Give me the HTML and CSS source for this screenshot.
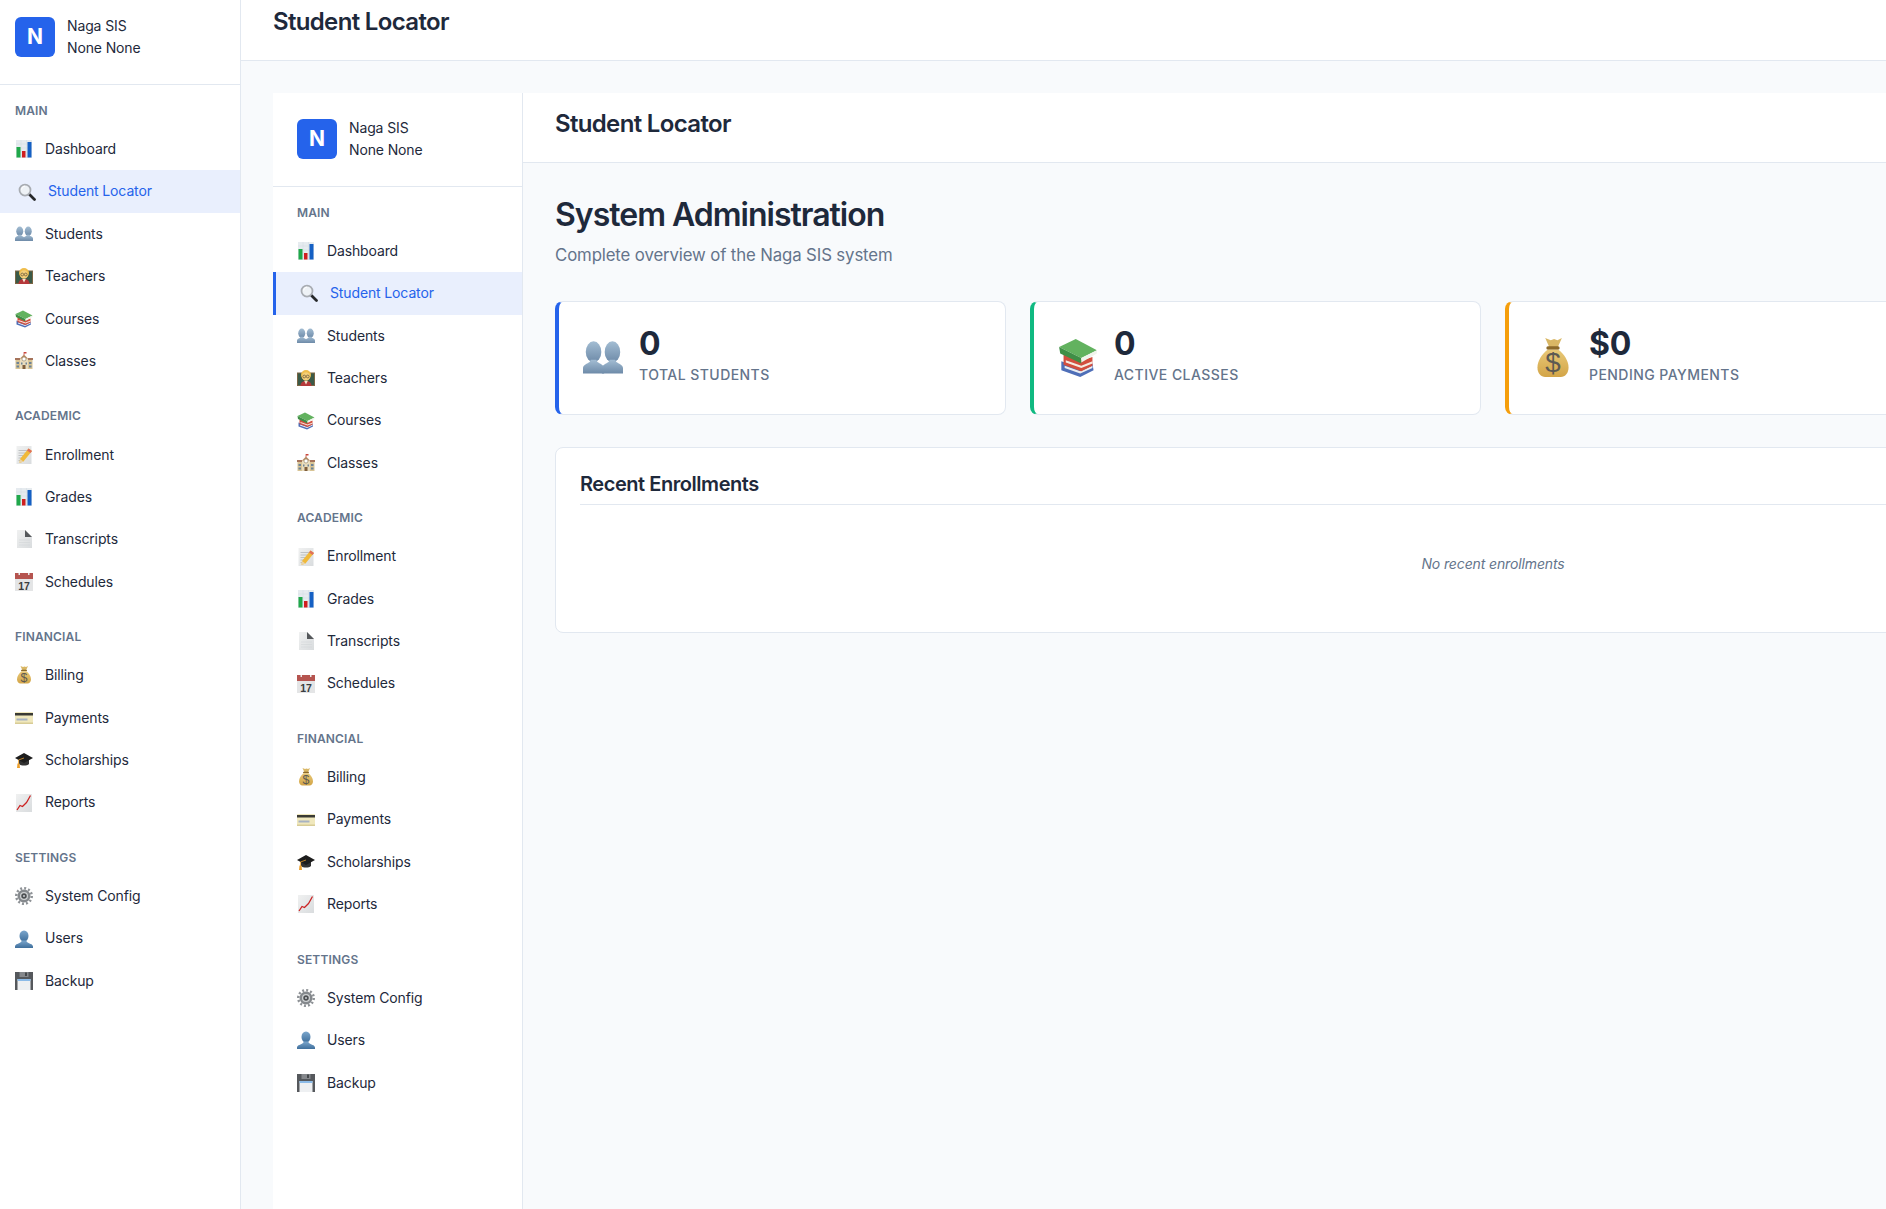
FILE: index.html
```html
<!DOCTYPE html>
<html lang="en">
<head>
<meta charset="utf-8">
<title>Student Locator</title>
<link rel="stylesheet" href="styles.css">
</head>
<body>
<svg class="sprite" xmlns="http://www.w3.org/2000/svg" aria-hidden="true">
  <defs>
    <linearGradient id="g-bust" x1="0" y1="0" x2="0" y2="1"><stop offset="0" stop-color="#a3bdd3"/><stop offset="1" stop-color="#6d8aa8"/></linearGradient>
    <linearGradient id="g-user" x1="0" y1="0" x2="0" y2="1"><stop offset="0" stop-color="#7ba6cc"/><stop offset="1" stop-color="#3f6f9c"/></linearGradient>
    <linearGradient id="g-bag" x1="0" y1="0" x2="0" y2="1"><stop offset="0" stop-color="#e8c877"/><stop offset="1" stop-color="#d3a548"/></linearGradient>
    <linearGradient id="g-sheet" x1="0" y1="0" x2="1" y2="1"><stop offset="0" stop-color="#f0f1f1"/><stop offset="1" stop-color="#d9dcde"/></linearGradient>
    <symbol id="i-chart" viewBox="0 0 36 36">
      <rect x="2" y="0" width="32" height="36" fill="#e6ebef"/>
      <path d="M2 8h32M2 16h32M2 24h32M12 0v36M23 0v36" stroke="#d3dae0" stroke-width="1"/>
      <rect x="3" y="14" width="8" height="21" fill="#1fa84a"/>
      <rect x="14" y="22" width="7" height="13" fill="#cf1f1f"/>
      <rect x="25" y="4" width="8" height="31" fill="#1560c4"/>
    </symbol>
    <symbol id="i-search" viewBox="0 0 36 36">
      <line x1="23" y1="23" x2="33" y2="33" stroke="#26282a" stroke-width="5.500" stroke-linecap="round"/>
      <circle cx="14" cy="14" r="11" fill="#eef2f6" stroke="#a8acb2" stroke-width="3.500"/>
      <path d="M7 13a8 8 0 0 1 7-7" fill="none" stroke="#fff" stroke-width="2"/>
    </symbol>
    <symbol id="i-busts" viewBox="0 0 36 36">
      <g id="i-bust-one">
        <ellipse cx="9.500" cy="12.500" rx="7" ry="9.500" fill="url(#g-bust)"/>
        <path d="M0 32v-5c0-3 4-4 6-5.500l1-2h5l1 2c2 1.500 6 2.500 6 5.500v5z" fill="url(#g-bust)"/>
      </g>
      <use href="#i-bust-one" x="17"/>
    </symbol>
    <symbol id="i-teacher" viewBox="0 0 36 36">
      <rect x="0" y="7" width="36" height="27" fill="#7a6544"/>
      <rect x="2" y="9" width="32" height="23" fill="#3a5a48"/>
      <path d="M7 34c0-7 4-10 11-10s11 3 11 10z" fill="#b5383a"/>
      <path d="M14.500 24h7l-3.500 7z" fill="#f3e7d3"/>
      <circle cx="18" cy="12" r="10" fill="#efbd4c"/>
      <ellipse cx="18" cy="15" rx="8" ry="8.500" fill="#f4cf79"/>
      <circle cx="14.500" cy="15" r="2.800" fill="none" stroke="#4a3d2a" stroke-width="1.200"/>
      <circle cx="21.500" cy="15" r="2.800" fill="none" stroke="#4a3d2a" stroke-width="1.200"/>
    </symbol>
    <symbol id="i-books" viewBox="0 0 36 36">
      <path d="M3 21l17 6 11-4 1 6-12 6-17-6z" fill="#4f6fb8"/>
      <path d="M6 25l14 5 11-5v2l-11 5-14-5z" fill="#eceef1"/>
      <path d="M5 14l17 6 9-3v8l-10 5-16-6z" fill="#d24e3e"/>
      <path d="M7 20l14 5 10-4v2l-10 4-14-5z" fill="#f4ebe2"/>
      <path d="M1 8l15-7 19 10-14 7z" fill="#62b25f"/>
      <path d="M1 8l20 10v5L2 14z" fill="#3f8f46"/>
      <path d="M21 18l14-7v3l-14 8z" fill="#f0f4ec"/>
    </symbol>
    <symbol id="i-school" viewBox="0 0 36 36">
      <rect x="1" y="13" width="34" height="21" fill="#d8c495"/>
      <rect x="0" y="12" width="10" height="4" fill="#a5735a"/>
      <rect x="26" y="12" width="10" height="4" fill="#a5735a"/>
      <path d="M9 14l9-9 9 9z" fill="#b98d63"/>
      <rect x="10" y="13" width="16" height="21" fill="#e9dcbd"/>
      <path d="M18 0v6" stroke="#c9463c" stroke-width="1.500"/><path d="M18 0h5v3h-5z" fill="#c9463c"/>
      <circle cx="18" cy="14" r="4" fill="#fff" stroke="#7b6a4c"/>
      <rect x="15" y="26" width="6" height="8" fill="#7f5e3d"/>
      <path d="M3 20h5v4H3zM3 27h5v4H3zM28 20h5v4h-5zM28 27h5v4h-5zM12 21h3v4h-3zM21 21h3v4h-3z" fill="#6d8397"/>
    </symbol>
    <symbol id="i-memo" viewBox="0 0 36 36">
      <rect x="3" y="0" width="30" height="36" fill="url(#g-sheet)"/>
      <path d="M7 9h18M7 14h14M7 19h10M7 24h8M7 29h6" stroke="#b0b4b7" stroke-width="1.500"/>
      <path d="M27 5l7 5-17 21-8 3 1-8z" fill="#f0b93a"/>
      <path d="M27 5l7 5-3 4-7-5z" fill="#e0705c"/>
      <path d="M10 26l7 5-8 3z" fill="#e9d3a8"/>
    </symbol>
    <symbol id="i-page" viewBox="0 0 36 36">
      <path d="M4 0h16l14 14v22H4z" fill="url(#g-sheet)"/>
      <path d="M20 0v14h14z" fill="#55585b"/>
      <path d="M8 20h22M8 25h22M8 30h22" stroke="#cfd2d4" stroke-width="1"/>
    </symbol>
    <symbol id="i-calendar" viewBox="0 0 36 36">
      <rect x="0" y="0" width="36" height="36" fill="#e4e5e6"/>
      <path d="M0 0h36v12H0z" fill="#b5544f"/>
      <path d="M7 0h3v4H7zM26 0h3v4h-3z" fill="#e8e9ea"/>
      <text x="18" y="33" text-anchor="middle" class="cal-day">17</text>
    </symbol>
    <symbol id="i-bag" viewBox="0 0 36 36">
      <path d="M11 0l5 2 3-1 3 1 4-2-4 9h-7z" fill="#d9b765"/>
      <rect x="12" y="7.500" width="12" height="3" rx="1.500" fill="#8c6a2b"/>
      <path d="M13 10.500c-5 4-9 10-9 16 0 5 3 8.500 7 8.500h14c4 0 7-3.500 7-8.500 0-6-4-12-9-16z" fill="url(#g-bag)"/>
      <text x="18" y="31" text-anchor="middle" class="bag-sign">$</text>
    </symbol>
    <symbol id="i-card" viewBox="0 0 36 36">
      <rect x="0" y="6" width="36" height="24" rx="1.500" fill="#f0e8bd"/>
      <rect x="0" y="8" width="36" height="5" fill="#3a3a34"/>
      <rect x="3" y="19" width="22" height="4" fill="#a7b2c2"/>
      <rect x="0" y="27" width="36" height="3" fill="#d8cc96"/>
    </symbol>
    <symbol id="i-cap" viewBox="0 0 36 36">
      <path d="M8 17v9c4 4 16 4 20 0v-9z" fill="#333"/>
      <path d="M0 14L18 4l18 10-18 10z" fill="#1d1d1d"/>
      <path d="M18 14L7 18v9" fill="none" stroke="#eda02c" stroke-width="1.500"/>
      <path d="M5 25h4l1 9H4z" fill="#eda02c"/>
    </symbol>
    <symbol id="i-trend" viewBox="0 0 36 36">
      <rect x="2" y="0" width="32" height="36" fill="url(#g-sheet)"/>
      <path d="M4 32l6-9 5 2 8-8 8-14" fill="none" stroke="#cc2222" stroke-width="2.500"/>
    </symbol>
    <symbol id="i-gear" viewBox="0 0 36 36">
      <circle cx="18" cy="18" r="13" fill="#85898d"/>
      <circle cx="18" cy="18" r="15.500" fill="none" stroke="#8f9397" stroke-width="5" stroke-dasharray="4 4.100"/>
      <circle cx="18" cy="18" r="8" fill="#cfd2d4"/>
      <circle cx="18" cy="18" r="5.500" fill="#4d5053"/>
      <circle cx="18" cy="18" r="2" fill="#c9ccd0"/>
    </symbol>
    <symbol id="i-user" viewBox="0 0 36 36">
      <ellipse cx="18" cy="12" rx="9" ry="11" fill="url(#g-user)"/>
      <path d="M0 36v-3c0-5 9-6 12-9l2-3h8l2 3c3 3 12 4 12 9v3z" fill="url(#g-user)"/>
    </symbol>
    <symbol id="i-disk" viewBox="0 0 36 36">
      <path d="M0 0h36v36H0z" fill="#55585c"/>
      <rect x="9" y="0" width="18" height="10" fill="#85888c"/>
      <rect x="20" y="1" width="4" height="7" fill="#45484b"/>
      <rect x="5" y="14" width="26" height="22" fill="#eef0f2"/>
      <rect x="5" y="14" width="26" height="4" fill="#8cbbe8"/>
    </symbol>
  </defs>
</svg>

<div class="shell">
  <aside class="sidebar">
    <div class="brand">
      <div class="brand-mark">N</div>
      <div class="brand-text"><div>Naga SIS</div><div>None None</div></div>
    </div>
    <nav class="nav">
      <section class="nav-group">
        <h2 class="nav-title">Main</h2>
        <a class="nav-item"><svg class="nav-icon"><use href="#i-chart"/></svg><span>Dashboard</span></a>
        <a class="nav-item is-active"><svg class="nav-icon"><use href="#i-search"/></svg><span>Student Locator</span></a>
        <a class="nav-item"><svg class="nav-icon"><use href="#i-busts"/></svg><span>Students</span></a>
        <a class="nav-item"><svg class="nav-icon"><use href="#i-teacher"/></svg><span>Teachers</span></a>
        <a class="nav-item"><svg class="nav-icon"><use href="#i-books"/></svg><span>Courses</span></a>
        <a class="nav-item"><svg class="nav-icon"><use href="#i-school"/></svg><span>Classes</span></a>
      </section>
      <section class="nav-group">
        <h2 class="nav-title">Academic</h2>
        <a class="nav-item"><svg class="nav-icon"><use href="#i-memo"/></svg><span>Enrollment</span></a>
        <a class="nav-item"><svg class="nav-icon"><use href="#i-chart"/></svg><span>Grades</span></a>
        <a class="nav-item"><svg class="nav-icon"><use href="#i-page"/></svg><span>Transcripts</span></a>
        <a class="nav-item"><svg class="nav-icon"><use href="#i-calendar"/></svg><span>Schedules</span></a>
      </section>
      <section class="nav-group">
        <h2 class="nav-title">Financial</h2>
        <a class="nav-item"><svg class="nav-icon"><use href="#i-bag"/></svg><span>Billing</span></a>
        <a class="nav-item"><svg class="nav-icon"><use href="#i-card"/></svg><span>Payments</span></a>
        <a class="nav-item"><svg class="nav-icon"><use href="#i-cap"/></svg><span>Scholarships</span></a>
        <a class="nav-item"><svg class="nav-icon"><use href="#i-trend"/></svg><span>Reports</span></a>
      </section>
      <section class="nav-group">
        <h2 class="nav-title">Settings</h2>
        <a class="nav-item"><svg class="nav-icon"><use href="#i-gear"/></svg><span>System Config</span></a>
        <a class="nav-item"><svg class="nav-icon"><use href="#i-user"/></svg><span>Users</span></a>
        <a class="nav-item"><svg class="nav-icon"><use href="#i-disk"/></svg><span>Backup</span></a>
      </section>
    </nav>
  </aside>

  <div class="main">
    <header class="topbar"><h1 class="topbar-title">Student Locator</h1></header>
    <div class="outer-content">
      <div class="shell shell-inner">
        <aside class="sidebar">
          <div class="brand">
            <div class="brand-mark">N</div>
            <div class="brand-text"><div>Naga SIS</div><div>None None</div></div>
          </div>
          <nav class="nav">
            <section class="nav-group">
              <h2 class="nav-title">Main</h2>
              <a class="nav-item"><svg class="nav-icon"><use href="#i-chart"/></svg><span>Dashboard</span></a>
              <a class="nav-item is-active"><svg class="nav-icon"><use href="#i-search"/></svg><span>Student Locator</span></a>
              <a class="nav-item"><svg class="nav-icon"><use href="#i-busts"/></svg><span>Students</span></a>
              <a class="nav-item"><svg class="nav-icon"><use href="#i-teacher"/></svg><span>Teachers</span></a>
              <a class="nav-item"><svg class="nav-icon"><use href="#i-books"/></svg><span>Courses</span></a>
              <a class="nav-item"><svg class="nav-icon"><use href="#i-school"/></svg><span>Classes</span></a>
            </section>
            <section class="nav-group">
              <h2 class="nav-title">Academic</h2>
              <a class="nav-item"><svg class="nav-icon"><use href="#i-memo"/></svg><span>Enrollment</span></a>
              <a class="nav-item"><svg class="nav-icon"><use href="#i-chart"/></svg><span>Grades</span></a>
              <a class="nav-item"><svg class="nav-icon"><use href="#i-page"/></svg><span>Transcripts</span></a>
              <a class="nav-item"><svg class="nav-icon"><use href="#i-calendar"/></svg><span>Schedules</span></a>
            </section>
            <section class="nav-group">
              <h2 class="nav-title">Financial</h2>
              <a class="nav-item"><svg class="nav-icon"><use href="#i-bag"/></svg><span>Billing</span></a>
              <a class="nav-item"><svg class="nav-icon"><use href="#i-card"/></svg><span>Payments</span></a>
              <a class="nav-item"><svg class="nav-icon"><use href="#i-cap"/></svg><span>Scholarships</span></a>
              <a class="nav-item"><svg class="nav-icon"><use href="#i-trend"/></svg><span>Reports</span></a>
            </section>
            <section class="nav-group">
              <h2 class="nav-title">Settings</h2>
              <a class="nav-item"><svg class="nav-icon"><use href="#i-gear"/></svg><span>System Config</span></a>
              <a class="nav-item"><svg class="nav-icon"><use href="#i-user"/></svg><span>Users</span></a>
              <a class="nav-item"><svg class="nav-icon"><use href="#i-disk"/></svg><span>Backup</span></a>
            </section>
          </nav>
        </aside>

        <div class="main">
          <header class="topbar"><h1 class="topbar-title">Student Locator</h1></header>
          <main class="content">
            <div class="page-head">
              <h2 class="page-title">System Administration</h2>
              <p class="page-sub">Complete overview of the Naga SIS system</p>
            </div>
            <div class="stats">
              <div class="stat stat-blue">
                <svg class="stat-icon"><use href="#i-busts"/></svg>
                <div><div class="stat-value">0</div><div class="stat-label">Total Students</div></div>
              </div>
              <div class="stat stat-green">
                <svg class="stat-icon"><use href="#i-books"/></svg>
                <div><div class="stat-value">0</div><div class="stat-label">Active Classes</div></div>
              </div>
              <div class="stat stat-amber">
                <svg class="stat-icon"><use href="#i-bag"/></svg>
                <div><div class="stat-value">$0</div><div class="stat-label">Pending Payments</div></div>
              </div>
            </div>
            <section class="panel">
              <h3 class="panel-title">Recent Enrollments</h3>
              <p class="panel-empty">No recent enrollments</p>
            </section>
          </main>
        </div>
      </div>
    </div>
  </div>
</div>
</body>
</html>
```
FILE: styles.css
```css
* { box-sizing: border-box; }

html, body {
  margin: 0;
  height: 1209px;
  overflow: hidden;
  background: #f8fafc;
}

body {
  font-family: Inter, "Liberation Sans", sans-serif;
  font-size: 14px;
  line-height: 1.6;
  letter-spacing: -0.13px;
  color: #1e293b;
}

.sprite { display: block; width: 0; height: 0; overflow: hidden; }
.cal-day { font: 600 21px "Liberation Sans", sans-serif; fill: #3a3d40; letter-spacing: 0; }
.bag-sign { font: 400 25px "Liberation Sans", sans-serif; fill: #5d5a52; letter-spacing: 0; }

.shell {
  display: flex;
  width: 2504px;
  min-height: 1218px;
  margin: -8.8px 0 0 -9px;
}
.shell-inner {
  width: 2190px;
  min-height: 1140px;
  margin: 0;
}

.sidebar {
  flex: 0 0 250px;
  background: #fff;
  border-right: 1px solid #e2e8f0;
}

.brand {
  display: flex;
  align-items: center;
  gap: 12px;
  padding: 24px 24px 25px;
  border-bottom: 1px solid #e2e8f0;
}
.brand-text { line-height: 22px; }
.brand-mark {
  flex: 0 0 40px;
  height: 40px;
  display: flex;
  align-items: center;
  justify-content: center;
  background: #2563eb;
  border-radius: 6px;
  color: #fff;
  font-size: 21px;
  font-weight: 700;
}

.nav { padding-top: 15.6px; }
.nav-group { margin-bottom: 24px; }
.nav-title {
  margin: 0 0 8px;
  padding: 0 24px;
  font-size: 12px;
  font-weight: 600;
  letter-spacing: 0.15px;
  text-transform: uppercase;
  color: #64748b;
}
.nav-item {
  display: flex;
  align-items: center;
  gap: 12px;
  padding: 10px 24px;
  color: #1e293b;
}
.nav-item.is-active {
  background: #e9effd;
  border-left: 3px solid #2563eb;
  color: #2563eb;
}
.nav-icon { flex: 0 0 18px; width: 18px; height: 18px; }

.main {
  flex: 1;
  min-width: 0;
  display: flex;
  flex-direction: column;
}
.topbar {
  background: #fff;
  border-bottom: 1px solid #e2e8f0;
  padding: 12px 32px 19px;
}
.topbar-title {
  margin: 0;
  font-size: 24px;
  font-weight: 600;
  line-height: 38px;
  letter-spacing: -0.66px;
  color: #1e293b;
}
.outer-content {
  flex: 1;
  padding: 31.8px 32px 32px;
}

.content { flex: 1; padding: 33px 32px 32px; }
.page-head { margin-bottom: 32px; }
.page-title {
  margin: 0 0 8px;
  font-size: 32px;
  font-weight: 600;
  line-height: 1.2;
  letter-spacing: -1px;
  color: #1e293b;
}
.page-sub {
  margin: 0;
  font-size: 16.8px;
  color: #64748b;
}

.stats {
  display: grid;
  grid-template-columns: repeat(4, 1fr);
  gap: 24px;
  margin-bottom: 32px;
}
.stat {
  display: flex;
  align-items: center;
  gap: 16px;
  padding: 24px;
  background: #fff;
  border: 1px solid #e2e8f0;
  border-left-width: 4px;
  border-radius: 8px;
}
.stat-blue { border-left-color: #2563eb; }
.stat-green { border-left-color: #10b981; }
.stat-amber { border-left-color: #f59e0b; }
.stat-icon { flex: 0 0 40px; width: 40px; height: 40px; }
.stat-value {
  margin-top: -1px;
  font-size: 32px;
  font-weight: 700;
  line-height: 1.2;
  letter-spacing: -0.3px;
}
.stat-label {
  margin: 0 0 4px;
  font-size: 14px;
  font-weight: 500;
  letter-spacing: 0.45px;
  text-transform: uppercase;
  color: #64748b;
}

.panel {
  padding: 24px;
  background: #fff;
  border: 1px solid #e2e8f0;
  border-radius: 8px;
}
.panel-title {
  margin: 0 0 16px;
  padding-bottom: 8px;
  border-bottom: 1px solid #e2e8f0;
  font-size: 20px;
  font-weight: 600;
  line-height: 1.2;
  letter-spacing: -0.45px;
}
.panel-empty {
  margin: 0;
  padding: 32px 32px 33px;
  text-align: center;
  font-style: italic;
  color: #64748b;
}
```
